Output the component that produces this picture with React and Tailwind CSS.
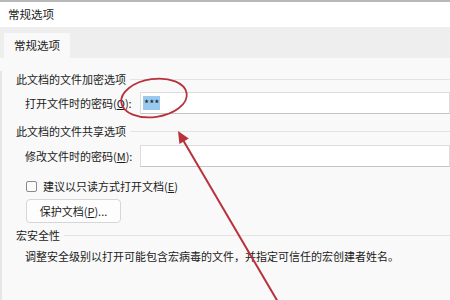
const font = { fontFamily: '"Noto Sans CJK SC", "Noto Sans", sans-serif' };

const GroupHeading = ({ children, className = '' }) => (
  <div className={`flex items-center h-4 pr-0 ${className}`}>
    <span className="whitespace-nowrap">{children}</span>
    <div className="flex-1 h-px bg-[#e3e3e3] ml-1" />
  </div>
);

const FieldRow = ({ label, keyChar, value, className = '' }) => (
  <div className={`flex items-center pl-[9px] ${className}`}>
    <span className="w-[115px] whitespace-nowrap">
      {label}(<span className="underline">{keyChar}</span>):
    </span>
    <div className="flex-1 h-[22px] bg-white border border-[#dcdcdc] border-b-[#c4c4c4] flex items-center pl-[2px]">
      {value && <span className="bg-[#99c9ef] px-[1px] leading-[14px] h-[14px]">{value}</span>}
    </div>
  </div>
);

export default function App() {
  return (
    <div className="relative w-[450px] h-[300px] overflow-hidden bg-[#f9f9f9] text-[11px] text-[#1b1b1b]" style={font}>
      {/* title bar */}
      <div className="h-[27px] bg-white border-t-2 border-[#b8b8b8] flex items-center pl-2 text-[11.5px]">
        常规选项
      </div>

      {/* tab strip */}
      <div className="h-[31px] bg-[#eeeeee] flex items-end pl-1">
        <div className="w-[66px] h-[25px] bg-[#f9f9f9] flex items-center justify-center text-[11.5px]">
          常规选项
        </div>
      </div>

      {/* panel */}
      <div className="pl-[14px] border-l-2 border-[#e6e6e6] h-full">
        <GroupHeading className="mt-[13px]">此文档的文件加密选项</GroupHeading>
        <FieldRow className="mt-[5px]" label="打开文件时的密码" keyChar="O" value="***" />

        <GroupHeading className="mt-[9px]">此文档的文件共享选项</GroupHeading>
        <FieldRow className="mt-[6px]" label="修改文件时的密码" keyChar="M" />

        <div className="flex items-center h-4 mt-[11px] pl-[10px] gap-[6px]">
          <div className="w-[11px] h-[11px] border border-[#8a8a8a] rounded-[2px] bg-[#fbfbfb]" />
          <span>建议以只读方式打开文档(<span className="underline">E</span>)</span>
        </div>

        <div className="ml-[10px] mt-[5px] w-[95px] h-[24px] bg-[#fdfdfd] border border-[#d6d6d6] rounded-[4px] flex items-center justify-center">
          保护文档(<span className="underline">P</span>)...
        </div>

        <GroupHeading className="mt-[4px]">宏安全性</GroupHeading>

        <div className="mt-[5px] pl-[9px] h-4 flex items-center whitespace-nowrap">
          调整安全级别以打开可能包含宏病毒的文件，并指定可信任的宏创建者姓名。
        </div>
      </div>

      {/* red annotations */}
      <svg className="absolute inset-0 pointer-events-none" width="450" height="300" viewBox="0 0 450 300">
        <ellipse cx="154" cy="98" rx="33" ry="19" transform="rotate(-8 154 98)" fill="none" stroke="#b8323c" strokeWidth="1.8" />
        <line x1="183" y1="140" x2="278" y2="302" stroke="#b8323c" strokeWidth="2" />
        <polygon points="178,131 188.8,138.6 179.4,144.1" fill="#b8323c" />
      </svg>
    </div>
  );
}
